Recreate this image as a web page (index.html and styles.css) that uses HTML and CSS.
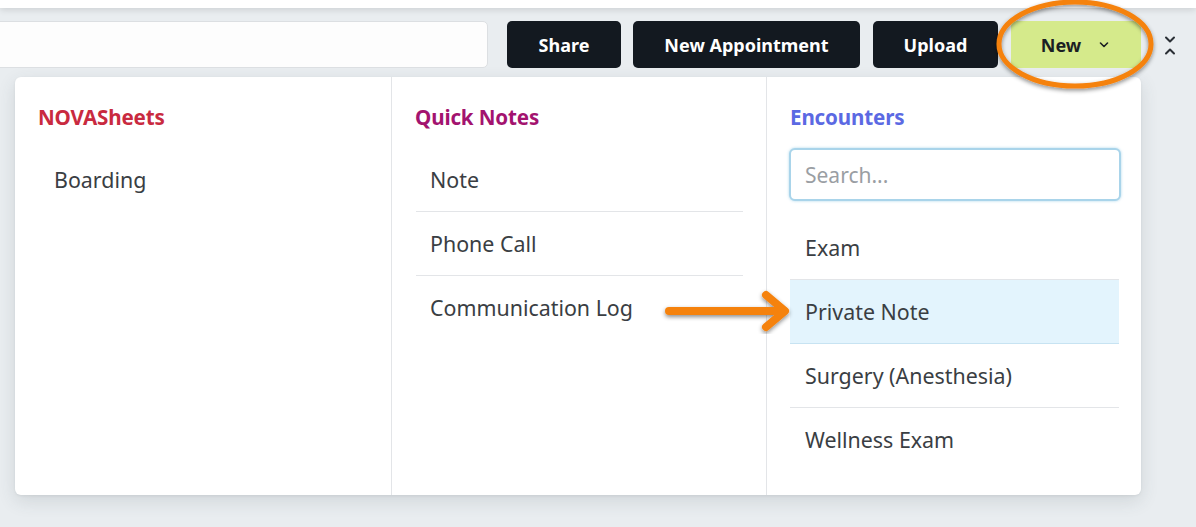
FILE: index.html
```html
<!DOCTYPE html>
<html>
<head>
<meta charset="utf-8">
<link rel="stylesheet" href="styles.css">
</head>
<body>
<div class="topstrip"></div>
<div class="page">
  <div class="toolbar">
    <div class="searchbar"></div>
    <button class="btn dark share">Share</button>
    <button class="btn dark appt">New Appointment</button>
    <button class="btn dark upload">Upload</button>
    <button class="btn lime newbtn">New
      <svg class="caret" width="10" height="6" viewBox="0 0 10 6"><path d="M1.5 1 L5 4.5 L8.5 1" fill="none" stroke="#1b1f23" stroke-width="1.6" stroke-linecap="round" stroke-linejoin="round"/></svg>
    </button>
    <div class="collapse">
      <svg width="14" height="22" viewBox="0 0 14 22"><path d="M3 2.5 L7 6.5 L11 2.5" fill="none" stroke="#2a2f35" stroke-width="2" stroke-linecap="round" stroke-linejoin="round"/><path d="M3 18.5 L7 14.5 L11 18.5" fill="none" stroke="#2a2f35" stroke-width="2" stroke-linecap="round" stroke-linejoin="round"/></svg>
    </div>
  </div>
  <div class="menu">
    <div class="col">
      <h3 class="head red">NOVASheets</h3>
      <ul class="items">
        <li>Boarding</li>
      </ul>
    </div>
    <div class="col">
      <h3 class="head magenta">Quick Notes</h3>
      <ul class="items lined">
        <li>Note</li>
        <li>Phone Call</li>
        <li>Communication Log</li>
      </ul>
    </div>
    <div class="col">
      <h3 class="head blue">Encounters</h3>
      <input class="search" type="text" placeholder="Search...">
      <ul class="items lined enc">
        <li>Exam</li>
        <li class="active">Private Note</li>
        <li>Surgery (Anesthesia)</li>
        <li>Wellness Exam</li>
      </ul>
    </div>
  </div>
</div>
<svg class="annot" width="1196" height="527" viewBox="0 0 1196 527">
  <defs>
    <filter id="sh" x="-20%" y="-20%" width="140%" height="140%">
      <feDropShadow dx="0" dy="2" stdDeviation="2" flood-color="#000" flood-opacity="0.45"/>
    </filter>
  </defs>
  <ellipse cx="1075" cy="44" rx="76" ry="42" fill="none" stroke="#f5820f" stroke-width="5" filter="url(#sh)"/>
  <g filter="url(#sh)" stroke="#f5820f" stroke-linecap="round" stroke-linejoin="round" fill="none">
    <path d="M669 311 L784 311" stroke-width="8"/>
    <path d="M766 295 L785 311 L766 327" stroke-width="8"/>
  </g>
</svg>
</body>
</html>
```

FILE: styles.css
```css
* { box-sizing: border-box; }
html, body { margin: 0; padding: 0; }
body {
  width: 1196px;
  height: 527px;
  overflow: hidden;
  background: #e9edf0;
  font-family: "Noto Sans", "Open Sans", sans-serif;
  color: #3b3f44;
  position: relative;
}
.topstrip {
  height: 8px;
  background: #ffffff;
  box-shadow: 0 2px 6px rgba(0,0,0,0.12);
  position: relative;
  z-index: 1;
}
.page {
  padding-top: 13px;
}
.toolbar {
  display: flex;
  align-items: center;
  height: 47px;
}
.searchbar {
  width: 498px;
  height: 47px;
  margin-left: -10px;
  margin-right: 19px;
  background: #fdfdfd;
  border: 1px solid #dcdfe2;
  border-radius: 5px;
}
.btn {
  height: 47px;
  border: none;
  border-radius: 5px;
  font-family: inherit;
  font-weight: 700;
  font-size: 18px;
  display: flex;
  align-items: center;
  justify-content: center;
  padding: 0;
}
.dark { background: #131920; color: #ffffff; }
.share { width: 114px; margin-right: 12px; }
.appt { width: 227px; margin-right: 13px; }
.upload { width: 125px; margin-right: 13px; }
.lime { background: #d5ea8b; color: #1b1f23; }
.newbtn { width: 130px; gap: 0; padding-right: 2px; }
.caret { margin-left: 18px; margin-top: 1px; }
.collapse {
  margin-left: 22px;
  display: flex;
  align-items: center;
  padding-top: 2px;
}
.menu {
  margin-top: 9px;
  margin-left: 15px;
  width: 1126px;
  height: 418px;
  background: #ffffff;
  border-radius: 6px;
  box-shadow: 0 6px 18px rgba(60,70,80,0.14), 0 1px 3px rgba(0,0,0,0.06);
  display: grid;
  grid-template-columns: 376px 375px 375px;
}
.col {
  padding: 24px 23px 23px 23px;
  border-left: 1px solid #e3e5e8;
}
.col:first-child { border-left: none; }
.head {
  margin: 0 0 15px 0;
  font-size: 20.6px;
  line-height: 32px;
  font-weight: 700;
  height: 32px;
  letter-spacing: -0.15px;
}
.red { color: #c92a40; }
.magenta { color: #a3136f; }
.blue { color: #5b69e3; }
.items {
  list-style: none;
  margin: 0;
  padding: 0;
}
.items li {
  height: 64px;
  line-height: 64px;
  padding-left: 15px;
  font-size: 21.4px;
  color: #3a3e43;
}
.col:first-child .items li { padding-left: 16px; }
.lined { margin-left: 1px; }
.lined li { border-bottom: 1px solid #e3e5e8; padding-left: 14px; }
.lined li:last-child { border-bottom: none; }
.search {
  display: block;
  width: 332px;
  height: 53px;
  margin: 0 0 15px -1px;
  border: 2px solid #a9d4ea;
  border-radius: 6px;
  box-shadow: 0 0 3px rgba(120,190,225,0.6);
  padding: 0 14px;
  font-family: inherit;
  font-size: 21px;
  color: #3a3e43;
  outline: none;
}
.search::placeholder { color: #9a9ea3; }
.enc { margin-left: 0; width: 329px; }
.enc li { padding-left: 15px; }
.enc li.active { background: #e3f4fd; border-bottom-color: #c7e3f2; }
.annot {
  position: absolute;
  left: 0;
  top: 0;
  pointer-events: none;
  z-index: 5;
}
```
